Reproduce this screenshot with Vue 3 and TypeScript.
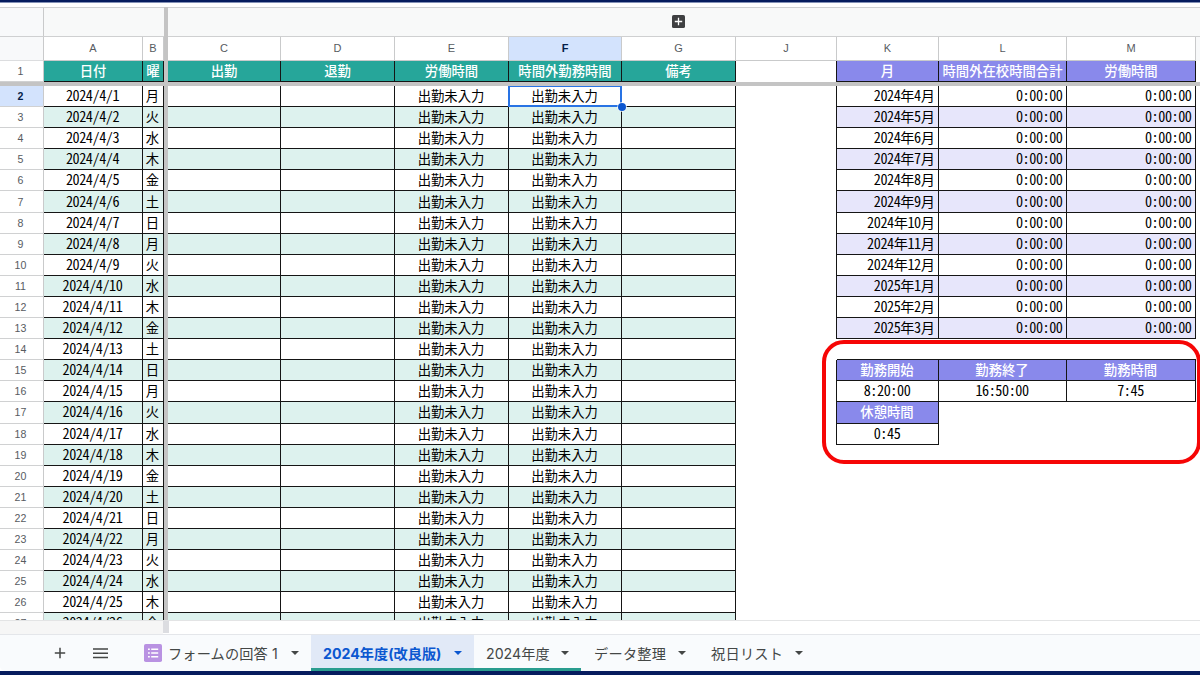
<script setup lang="ts">
interface Column {
  id: string
  title: string
  kind: 'green' | 'violet' | 'blank'
}

interface SheetCell {
  text: string
  cls: string[]
}

interface SheetRow {
  num: number
  cells: SheetCell[]
}

const columns: Column[] = [
  { id: 'A', title: '日付', kind: 'green' },
  { id: 'B', title: '曜', kind: 'green' },
  { id: 'C', title: '出勤', kind: 'green' },
  { id: 'D', title: '退勤', kind: 'green' },
  { id: 'E', title: '労働時間', kind: 'green' },
  { id: 'F', title: '時間外勤務時間', kind: 'green' },
  { id: 'G', title: '備考', kind: 'green' },
  { id: 'J', title: '', kind: 'blank' },
  { id: 'K', title: '月', kind: 'violet' },
  { id: 'L', title: '時間外在校時間合計', kind: 'violet' },
  { id: 'M', title: '労働時間', kind: 'violet' },
]

const weekdays = ['月', '火', '水', '木', '金', '土', '日']

function sideCells(num: number): SheetCell[] {
  const j = num <= 18 && num !== 14 ? ['edge'] : []
  const out: SheetCell[] = [{ text: '', cls: ['plain', ...j] }]
  if (num <= 13) {
    const month = num + 2
    const label = month <= 12 ? `2024年${month}月` : `2025年${month - 12}月`
    const tone = num % 2 ? ['boxed', 'right', 'lavender'] : ['boxed', 'right']
    out.push({ text: label, cls: tone }, { text: '0:00:00', cls: tone }, { text: '0:00:00', cls: tone })
  } else if (num === 14) {
    for (let i = 0; i < 3; i++) out.push({ text: '', cls: ['under'] })
  } else if (num === 15) {
    for (const t of ['勤務開始', '勤務終了', '勤務時間']) out.push({ text: t, cls: ['boxed', 'violet'] })
  } else if (num === 16) {
    for (const t of ['8:20:00', '16:50:00', '7:45']) out.push({ text: t, cls: ['boxed'] })
  } else if (num === 17) {
    out.push({ text: '休憩時間', cls: ['boxed', 'violet'] })
  } else if (num === 18) {
    out.push({ text: '0:45', cls: ['boxed'] })
  }
  return out
}

const rows: SheetRow[] = Array.from({ length: 26 }, (_, i) => {
  const num = i + 2
  const tone = num % 2 ? ['boxed', 'mint'] : ['boxed']
  const main = [`2024/4/${i + 1}`, weekdays[i % 7], '', '', '出勤未入力', '出勤未入力', '']
  return {
    num,
    cells: [
      ...main.map((text, c) => ({ text, cls: c === 5 && num === 2 ? [...tone, 'selected'] : tone })),
      ...sideCells(num),
    ],
  }
})

const hasDigits = (text: string): boolean => /\d/.test(text)

const tabs = [
  { name: 'フォームの回答 1', cls: 'form' },
  { name: '2024年度(改良版)', cls: 'active' },
  { name: '2024年度', cls: 'year' },
  { name: 'データ整理', cls: 'data' },
  { name: '祝日リスト', cls: 'holiday' },
]
</script>

<template>
  <div class="screen">
    <div class="band"></div>
    <div class="gap"></div>
    <div class="sheet">
      <div class="line group">
        <div class="corner"></div>
        <div class="group-left"></div>
        <div class="group-right">
          <svg class="expand" viewBox="0 0 13 13" width="13" height="13">
            <rect width="13" height="13" rx="1.6" fill="#3f4042" />
            <path d="M6.5 2.8v7.4M2.8 6.5h7.4" stroke="#fff" stroke-width="1.3" />
          </svg>
        </div>
      </div>
      <div class="line letters">
        <div class="corner"></div>
        <template v-for="c in columns" :key="c.id">
          <div class="letter" :class="{ on: c.id === 'F' }">{{ c.id }}</div>
          <i v-if="c.id === 'B'"></i>
        </template>
      </div>
      <div class="line titles">
        <div class="num">1</div>
        <template v-for="c in columns" :key="c.id">
          <div class="cell title" :class="[c.kind, c.kind === 'blank' ? 'edge' : 'boxed']">{{ c.title }}</div>
          <i v-if="c.id === 'B'"></i>
        </template>
      </div>
      <div class="freeze-row"></div>
      <div class="rows">
        <div v-for="r in rows" :key="r.num" class="line row">
          <div class="num" :class="{ on: r.num === 2 }">{{ r.num }}</div>
          <template v-for="(c, i) in r.cells" :key="i">
            <div class="cell" :class="[c.cls, { digits: hasDigits(c.text) }]">{{ c.text }}</div>
            <i v-if="i === 1"></i>
          </template>
        </div>
      </div>
      <div class="freeze-col"></div>
      <div class="callout"></div>
    </div>
    <div class="scroll">
      <div class="scroll-left"></div>
      <div class="scroll-split"></div>
    </div>
    <div class="tabs">
      <svg class="plus" viewBox="0 0 12 12" width="12" height="12">
        <path d="M6 .8v10.4M.8 6h10.4" stroke="#444746" stroke-width="1.5" />
      </svg>
      <svg class="menu" viewBox="0 0 15 11" width="15" height="11">
        <path d="M0 1h15M0 5.3h15M0 9.6h15" stroke="#444746" stroke-width="1.5" />
      </svg>
      <div v-for="t in tabs" :key="t.name" class="tab" :class="t.cls">
        <svg v-if="t.cls === 'form'" class="form-icon" viewBox="0 0 18 18" width="18" height="18">
          <rect width="18" height="18" rx="1.8" fill="#b992e2" />
          <path d="M4 5.2h1.8M4 9h1.8M4 12.8h1.8M7.2 5.2h7M7.2 9h7M7.2 12.8h7" stroke="#fff" stroke-width="1.6" />
        </svg>
        <span>{{ t.name }}</span>
        <svg class="caret" viewBox="0 0 8 4" width="8" height="4"><path d="M0 0h8L4 4z" fill="currentColor" /></svg>
      </div>
    </div>
    <div class="band bottom"></div>
  </div>
</template>

<style>
body {
  margin: 0;
  overflow: hidden;
}
</style>

<style scoped>
.screen {
  width: 1200px;
  height: 675px;
  display: flex;
  flex-direction: column;
  background: #fff;
  overflow: hidden;
  font-family: "Liberation Sans", "Noto Sans CJK JP", sans-serif;
}
.band {
  height: 2px;
  flex: none;
  background: #061c5e;
  border-bottom: 1px solid #8290b6;
}
.gap {
  height: 4px;
  flex: none;
}
.sheet {
  position: relative;
  height: 613px;
  flex: none;
  overflow: hidden;
  display: flex;
  flex-direction: column;
}
.line {
  display: grid;
  grid-template-columns: 44px 99px 21px 4px 113px 114px 114px 113px 114px 101px 102px 128px 129px 4px;
  flex: none;
}
.group {
  height: 30px;
  box-sizing: border-box;
  border-top: 1px solid #d0d1d2;
  border-bottom: 1px solid #cfd0d1;
  background: #f8f9f9;
}
.corner {
  border-right: 1px solid #c9cacb;
  background: #f8f9fa;
}
.group-left {
  grid-column: 2 / 4;
}
.group-right {
  grid-column: 5 / -1;
  display: flex;
  align-items: center;
  padding-left: 504px;
}
.expand {
  margin-top: -1px;
}
.letters {
  height: 24px;
  background: linear-gradient(to left, #f8f9fa 4px, #fff 4px);
}
.letters .corner {
  border-bottom: 1px solid #dcdddf;
}
.letter {
  display: flex;
  align-items: center;
  justify-content: center;
  box-sizing: border-box;
  padding-bottom: 1px;
  border-right: 1px solid #c9cacb;
  border-bottom: 1px solid #c9cacb;
  color: #575b5f;
  font-size: 11px;
}
.letter.on {
  background: #d3e3fd;
  color: #041e49;
  font-weight: 700;
}
.titles {
  height: 21px;
}
.num {
  display: flex;
  align-items: center;
  justify-content: center;
  box-sizing: border-box;
  padding-right: 2px;
  border-right: 1px solid #c9cacb;
  border-bottom: 1px solid #d0d1d2;
  color: #575b5f;
  font-size: 10.6px;
}
.num.on {
  background: #d3e3fd;
  color: #041e49;
  font-weight: 700;
}
.cell {
  display: flex;
  align-items: center;
  justify-content: center;
  box-sizing: border-box;
  min-width: 0;
  height: 100%;
  color: #000;
  font-family: "Noto Sans CJK JP", sans-serif;
  font-feature-settings: "hwid";
  font-size: 13.33px;
  line-height: 18px;
  white-space: nowrap;
  overflow: hidden;
}
.row .cell {
  padding-right: 1px;
}
.digits {
  font-size: 14.2px;
  line-height: 17px;
  padding-bottom: 1px;
  letter-spacing: -0.44px;
}
.boxed {
  border-right: 1px solid #151515;
  border-bottom: 1px solid #151515;
}
.edge {
  border-right: 1px solid #151515;
}
.under {
  border-bottom: 1px solid #151515;
}
.row .right {
  justify-content: flex-end;
  padding-right: 3.5px;
}
.mint {
  background: #ddf2ee;
}
.lavender {
  background: #e7e6fb;
}
.green {
  background: #26a69a;
}
.violet {
  background: #8989eb;
}
.title,
.violet {
  color: #fff;
  font-weight: 500;
}
.freeze-row {
  height: 4px;
  flex: none;
  background: #c4c4c4;
}
.rows {
  height: 534px;
  flex: none;
  overflow: hidden;
}
.row {
  height: 21.095px;
}
.freeze-col {
  position: absolute;
  left: 164px;
  top: 0;
  width: 4px;
  height: 613px;
  background: #c4c4c4;
}
.selected {
  position: relative;
  overflow: visible;
  border-color: transparent;
}
.selected::before {
  content: "";
  position: absolute;
  box-sizing: border-box;
  left: -1px;
  top: 0;
  width: 114px;
  height: 21px;
  border: 2px solid #2873e4;
  border-top-width: 1px;
}
.selected::after {
  content: "";
  position: absolute;
  left: 109px;
  top: 17px;
  width: 8px;
  height: 8px;
  border-radius: 50%;
  background: #0b57d0;
  box-shadow: 0 0 0 0.7px #fff;
  z-index: 2;
}
.callout {
  position: absolute;
  box-sizing: border-box;
  left: 821.5px;
  top: 333px;
  width: 379px;
  height: 124px;
  border: 4px solid #f60606;
  border-radius: 22px;
}
.scroll {
  display: flex;
  height: 14px;
  flex: none;
  box-sizing: border-box;
  border-top: 1px solid #e3e4e5;
}
.scroll-left {
  width: 163px;
  background: #f6f6f6;
}
.scroll-split {
  width: 6px;
  height: 12px;
  background: #dcdde1;
}
.tabs {
  display: flex;
  align-items: center;
  height: 37px;
  flex: none;
  box-sizing: border-box;
  border-top: 1px solid #e4e6ea;
  border-bottom-left-radius: 5px;
  background: #f9fbfd;
  color: #444746;
  font-family: Inter, "Noto Sans CJK JP", sans-serif;
  font-size: 14.2px;
}
.plus {
  margin-left: 54px;
}
.menu {
  margin-left: 27px;
}
.tab {
  display: flex;
  align-items: center;
  box-sizing: border-box;
  height: 36px;
  white-space: nowrap;
  border-bottom: 3px solid transparent;
  padding-top: 2px;
}
.form {
  width: 167px;
  margin-left: 36px;
}
.form span {
  margin-left: 6px;
  letter-spacing: 0.15px;
}
.caret {
  margin-left: auto;
  margin-top: 1px;
  flex: none;
}
.form .caret {
  margin-right: 12px;
}
.active {
  width: 163px;
  padding-left: 12px;
  padding-right: 12px;
  background: #e1e9f7;
  border-bottom-color: #2a9d8f;
  color: #0b57d0;
  font-weight: 700;
}
.year {
  width: 107px;
  margin-left: 0;
  padding-left: 12px;
  padding-right: 12px;
  border-bottom-color: #2a9d8f;
  box-shadow: inset 1px 0 #f9fbfd;
}
.data {
  width: 105px;
  padding-left: 13px;
}
.data span,
.holiday span {
  letter-spacing: 0.25px;
}
.holiday {
  width: 92px;
  margin-left: 25px;
}
.bottom {
  height: 4px;
  border: 0;
}
</style>
